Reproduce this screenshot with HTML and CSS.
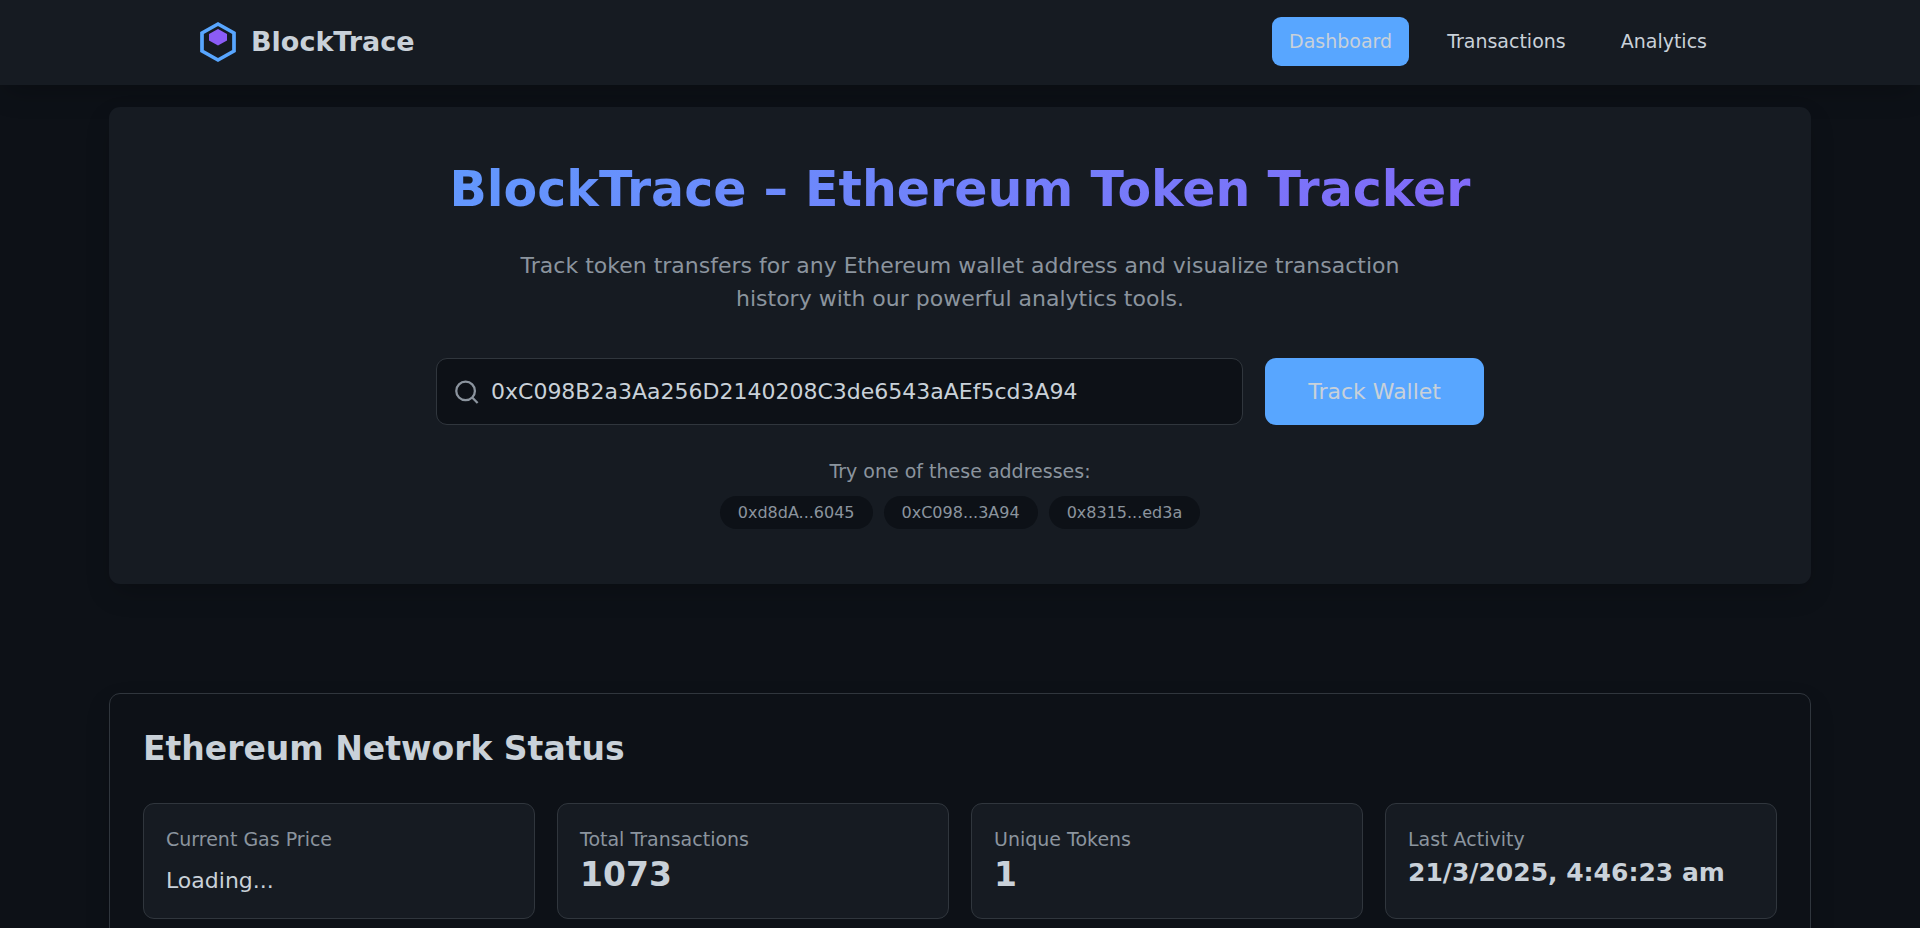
FILE: index.html
```html
<!DOCTYPE html>
<html lang="en">
<head>
<meta charset="utf-8">
<meta name="viewport" content="width=device-width, initial-scale=1">
<title>BlockTrace</title>
<link rel="stylesheet" href="styles.css">
</head>
<body>
<header class="site-header">
  <div class="header-inner">
    <a class="logo" href="#">
      <svg class="logo-icon" viewBox="0 0 44 44" aria-hidden="true">
        <path d="M22 4 38 13V31L22 40 6 31V13Z" fill="none" stroke="#58a6ff" stroke-width="3.7"/>
        <path d="M22 9 31 14V20.500L22 25.500 13 20.500V14Z" fill="#8b5cf6"/>
      </svg>
      <span>BlockTrace</span>
    </a>
    <nav class="nav">
      <a class="nav-link active" href="#">Dashboard</a>
      <a class="nav-link" href="#">Transactions</a>
      <a class="nav-link" href="#">Analytics</a>
    </nav>
  </div>
</header>
<main class="main">
  <section class="hero">
    <h1 class="hero-title">BlockTrace – Ethereum Token Tracker</h1>
    <p class="hero-text">Track token transfers for any Ethereum wallet address and visualize transaction history with our powerful analytics tools.</p>
    <form class="search">
      <label class="search-field">
        <svg class="search-icon" viewBox="0 0 24 24" fill="none" stroke="currentColor" stroke-width="2.1" aria-hidden="true">
          <circle cx="10.700" cy="11" r="8.600"/>
          <path d="m16.800 17.100 5 5"/>
        </svg>
        <input class="search-input" type="text" aria-label="Wallet address" value="0xC098B2a3Aa256D2140208C3de6543aAEf5cd3A94">
      </label>
      <button class="search-button" type="button">Track Wallet</button>
    </form>
    <p class="hint">Try one of these addresses:</p>
    <div class="chips">
      <button class="chip" type="button">0xd8dA...6045</button>
      <button class="chip" type="button">0xC098...3A94</button>
      <button class="chip" type="button">0x8315...ed3a</button>
    </div>
  </section>
  <section class="status">
    <h2 class="status-title">Ethereum Network Status</h2>
    <div class="cards">
      <article class="card">
        <h3 class="card-label">Current Gas Price</h3>
        <p class="card-loading">Loading...</p>
      </article>
      <article class="card">
        <h3 class="card-label">Total Transactions</h3>
        <p class="card-value">1073</p>
      </article>
      <article class="card">
        <h3 class="card-label">Unique Tokens</h3>
        <p class="card-value">1</p>
      </article>
      <article class="card">
        <h3 class="card-label">Last Activity</h3>
        <p class="card-date">21/3/2025, 4:46:23 am</p>
      </article>
    </div>
  </section>
</main>
</body>
</html>
```
FILE: styles.css
```css
:root {
  --bg: #0d1117;
  --surface: #161b22;
  --border: #30363d;
  --text: #c9d1d9;
  --muted: #8b949e;
  --blue: #58a6ff;
  --purple: #8b5cf6;
  --shadow: 0 11px 28px -6px rgba(0, 0, 0, 0.25);
}

* {
  box-sizing: border-box;
  margin: 0;
}

body {
  background: var(--bg);
  color: var(--text);
  font-family: "DejaVu Sans", sans-serif;
  font-size: 19px;
  line-height: 28px;
}

button,
input {
  font: inherit;
  color: inherit;
  border: 0;
}

a {
  color: inherit;
  text-decoration: none;
}

.site-header {
  background: var(--surface);
  box-shadow: var(--shadow);
}

.header-inner {
  display: flex;
  align-items: center;
  justify-content: space-between;
  max-width: 1572px;
  min-height: 85px;
  margin: 0 auto;
  padding: 16px 22px 18px;
}

.logo {
  display: flex;
  align-items: center;
  gap: 11px;
  font-size: 27px;
  font-weight: 700;
}

.logo-icon {
  width: 44px;
  height: 44px;
}

.nav {
  display: flex;
  gap: 21px;
}

.nav-link {
  padding: 10px 17px 11px;
  border-radius: 9px;
}

.nav-link.active {
  background: var(--blue);
}

.main {
  width: calc(100% - 44px);
  max-width: 1702px;
  margin: 0 auto;
  padding: 22px 0 66px;
}

.hero {
  padding: 55px 33px;
  background: var(--surface);
  border-radius: 11px;
  box-shadow: var(--shadow);
  text-align: center;
}

.hero-title {
  margin-bottom: 31px;
  font-size: 49px;
  line-height: 56px;
  color: transparent;
  background: linear-gradient(135deg, var(--blue), var(--purple));
  -webkit-background-clip: text;
  background-clip: text;
}

.hero-text {
  max-width: 880px;
  margin: 0 auto 43px;
  font-size: 22px;
  line-height: 33px;
  color: var(--muted);
}

.search {
  display: flex;
  gap: 22px;
  max-width: 1048px;
  margin: 0 auto 32px;
}

.search-field {
  display: flex;
  flex: 1;
  align-items: center;
  gap: 11px;
  padding: 0 17px;
  background: var(--bg);
  border: 1px solid var(--border);
  border-radius: 11px;
}

.search-icon {
  width: 26px;
  height: 26px;
  color: var(--muted);
}

.search-input {
  flex: 1;
  min-width: 0;
  padding: 0;
  background: none;
  outline: 0;
  font-size: 22px;
}

.search-button {
  padding: 17px 43px;
  background: var(--blue);
  border-radius: 11px;
  font-size: 22px;
  line-height: 33px;
}

.hint {
  margin-bottom: 11px;
  color: var(--muted);
}

.chips {
  display: flex;
  flex-wrap: wrap;
  justify-content: center;
  gap: 11px;
}

.chip {
  padding: 5px 18px 4px;
  background: var(--bg);
  border-radius: 17px;
  color: var(--muted);
  font-size: 16px;
  line-height: 24px;
}

.status {
  margin-top: 109px;
  padding: 33px;
  border: 1px solid var(--border);
  border-radius: 11px;
  background: var(--bg);
  box-shadow: var(--shadow);
}

.status-title {
  margin-bottom: 33px;
  font-size: 33px;
  line-height: 43px;
}

.cards {
  display: grid;
  grid-template-columns: repeat(4, 1fr);
  gap: 22px;
}

.card {
  padding: 22px 22px 20px;
  background: var(--surface);
  border: 1px solid var(--border);
  border-radius: 11px;
}

.card-label {
  font-size: 19px;
  font-weight: 400;
  line-height: 26px;
  color: var(--muted);
}

.card-loading {
  margin-top: 12px;
  font-size: 22px;
  line-height: 33px;
}

.card-value {
  font-size: 33px;
  font-weight: 700;
  line-height: 46px;
}

.card-date {
  font-size: 25px;
  font-weight: 700;
  line-height: 42px;
}
```
